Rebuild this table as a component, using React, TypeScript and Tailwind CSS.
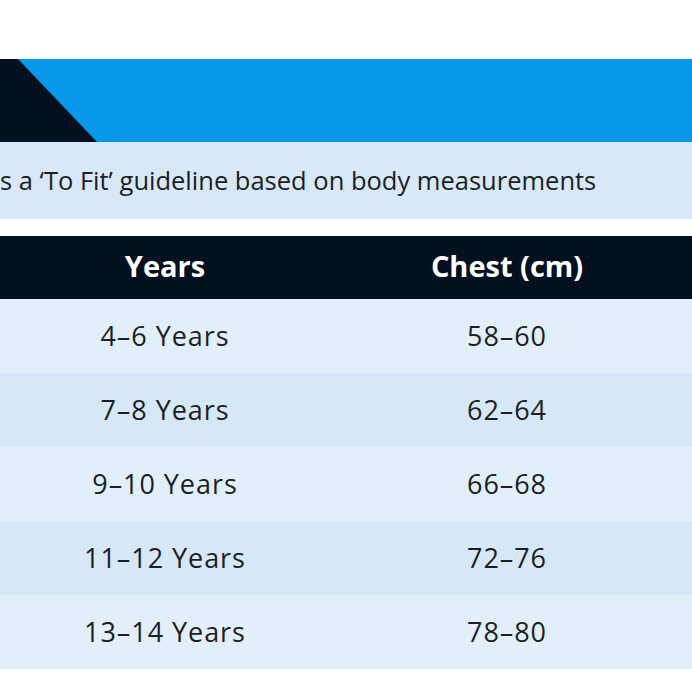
import React from "react";

const rows = [
  { years: "4–6 Years", chest: "58–60" },
  { years: "7–8 Years", chest: "62–64" },
  { years: "9–10 Years", chest: "66–68" },
  { years: "11–12 Years", chest: "72–76" },
  { years: "13–14 Years", chest: "78–80" },
];

export default function App() {
  return (
    <div
      className="w-[692px] h-[692px] overflow-hidden bg-white"
      style={{ fontFamily: "'Open Sans', 'Noto Sans', sans-serif" }}
    >
      {/* Banner */}
      <div className="mt-[59px] h-[83px] bg-[#0897e9] relative">
        <svg className="absolute left-0 top-0" width="100" height="83" viewBox="0 0 100 83">
          <polygon points="0,0 18,0 97,83 0,83" fill="#03101f" />
        </svg>
      </div>

      {/* Guideline note */}
      <div className="h-[77px] bg-[#d8e8f9] flex items-center">
        <p className="text-[25.5px] text-[#1b1f24] whitespace-nowrap">
          s a ‘To Fit’ guideline based on body measurements
        </p>
      </div>

      {/* Table */}
      <div className="mt-[17px]">
        <div className="h-[63px] bg-[#03101f] grid grid-cols-[330px_354px_1fr] items-center text-white font-bold text-[29px] pb-[3px]">
          <div className="text-center">Years</div>
          <div className="text-center">Chest (cm)</div>
          <div />
        </div>
        {rows.map((r, i) => (
          <div
            key={r.years}
            className={
              "h-[74px] grid grid-cols-[330px_354px_1fr] items-center text-[27px] tracking-[0.035em] text-[#1b1f24] " +
              (i % 2 === 0 ? "bg-[#e2effb]" : "bg-[#d6e7f8]")
            }
          >
            <div className="text-center">{r.years}</div>
            <div className="text-center">{r.chest}</div>
            <div />
          </div>
        ))}
      </div>
    </div>
  );
}
